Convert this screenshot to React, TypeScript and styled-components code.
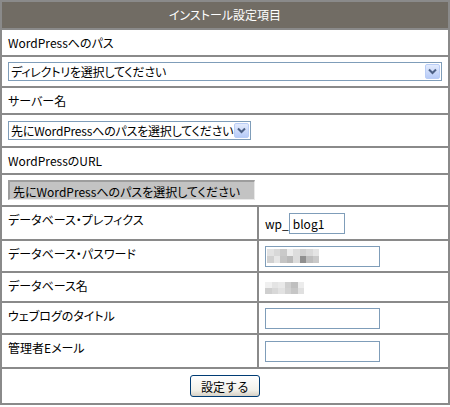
import React from 'react'
import styled, { createGlobalStyle } from 'styled-components'

const GlobalStyle = createGlobalStyle`
  html, body {
    margin: 0;
    padding: 0;
    background: #ffffff;
  }
  body {
    font-family: 'Noto Sans CJK JP', 'DejaVu Sans', sans-serif;
    font-size: 12px;
    color: #000000;
    font-feature-settings: 'palt';
  }
`

const SettingsTable = styled.table`
  width: 448px;
  border-collapse: separate;
  border-spacing: 0;
  border: 1px solid #8a8a8a;
  font-size: 12px;
  line-height: 14px;
`

const HeaderCell = styled.th`
  height: 26px;
  padding: 0;
  background: #716c64;
  color: #ffffff;
  font-weight: normal;
  text-align: center;
  border: 1px solid #8a8a8a;
`

const Cell = styled.td<{ $height?: number }>`
  height: ${({ $height }) => ($height ? `${$height}px` : 'auto')};
  padding: 0 6px;
  border: 1px solid #8a8a8a;
  vertical-align: middle;
  white-space: nowrap;
`

const LabelCell = styled.td`
  width: 243px;
  padding: 6px 6px 0;
  border: 1px solid #8a8a8a;
  vertical-align: top;
  white-space: nowrap;
`

const CenterCell = styled(Cell)`
  text-align: center;
`

const SelectWrap = styled.div<{ $width: number }>`
  position: relative;
  width: ${({ $width }) => $width}px;
  height: 19px;
  box-sizing: border-box;
  border: 1px solid #7f9db9;
  background: #ffffff;
`

const SelectBox = styled.select`
  appearance: none;
  width: 100%;
  height: 17px;
  border: none;
  outline: none;
  margin: 0;
  padding: 0 16px 0 2px;
  background: transparent;
  font-family: 'Noto Sans CJK JP', 'DejaVu Sans', sans-serif;
  font-size: 12px;
  letter-spacing: -0.2px;
  font-feature-settings: 'palt';
  color: #000000;
`

const ArrowButton = styled.span`
  position: absolute;
  top: 1px;
  right: 1px;
  width: 15px;
  height: 15px;
  box-sizing: border-box;
  border: 1px solid #b9cdf6;
  border-radius: 2px;
  background: linear-gradient(#e3ebfd, #b7cbf7);
  display: flex;
  align-items: center;
  justify-content: center;
  pointer-events: none;
`

const ReadonlyField = styled.div`
  width: 247px;
  height: 20px;
  box-sizing: border-box;
  padding: 2px 3px 0;
  background: #c3c3c3;
  border-top: 2px solid #9d9d9d;
  border-left: 2px solid #9d9d9d;
  border-right: 1px solid #e8e8e8;
  border-bottom: 1px solid #e8e8e8;
  font-size: 12px;
  line-height: 15px;
`

const Prefix = styled.span`
  vertical-align: middle;
`

const TextInput = styled.input<{ $width: number }>`
  width: ${({ $width }) => $width}px;
  height: 21px;
  box-sizing: border-box;
  border: 1px solid #7f9db9;
  padding: 0 3px;
  margin: 0;
  font-family: 'Noto Sans CJK JP', 'DejaVu Sans', sans-serif;
  font-size: 12px;
  vertical-align: middle;
  outline: none;
`

const FieldBox = styled.div`
  position: relative;
  display: inline-block;
  vertical-align: middle;
`

const Mosaic = styled.span<{ $cols: number }>`
  display: grid;
  grid-template-columns: repeat(${({ $cols }) => $cols}, 6.5px);
  grid-auto-rows: 7px;
`

const MosaicOverlay = styled(Mosaic)`
  position: absolute;
  top: 3px;
  left: 2px;
`

const MosaicInline = styled(Mosaic)`
  grid-auto-rows: 6px;
  margin-top: 1px;
`

const Pixel = styled.span<{ $shade: string }>`
  background: ${({ $shade }) => $shade};
`

const SubmitButton = styled.button`
  width: 70px;
  height: 22px;
  padding: 0;
  border: 1px solid #003c74;
  border-radius: 3px;
  background: linear-gradient(#ffffff, #f2f1ea 70%, #d6d0c5);
  font-family: 'Noto Sans CJK JP', 'DejaVu Sans', sans-serif;
  font-size: 12px;
  color: #000000;
`

const Arrow = () => (
  <svg width="9" height="7" viewBox="0 0 9 7">
    <path d="M1 1.5 L4.5 5 L8 1.5" fill="none" stroke="#4d6185" strokeWidth="2" />
  </svg>
)

const passwordShades = [
  '#e2e2e2', '#d8d8d8', '#c9c9c9', '#ececec', '#dddddd', '#cfcfcf', '#d9d9d9', '#e4e4e4',
  '#d0d0d0', '#e6e6e6', '#c4c4c4', '#b9b9b9', '#dcdcdc', '#8f8f8f', '#bdbdbd', '#c9c9c9',
]
const nameShades = [
  '#f0f0f0', '#e4e4e4', '#e9e9e9', '#cfcfcf', '#bfbfbf', '#ececec',
  '#cfcfcf', '#d8d8d8', '#e2e2e2', '#d2d2d2', '#c6c6c6', '#e0e0e0',
]

const Select: React.FC<{ width: number; label: string }> = ({ width, label }) => (
  <SelectWrap $width={width}>
    <SelectBox defaultValue="">
      <option value="">{label}</option>
    </SelectBox>
    <ArrowButton>
      <Arrow />
    </ArrowButton>
  </SelectWrap>
)

export default function App() {
  return (
    <>
      <GlobalStyle />
      <SettingsTable>
        <tbody>
          <tr>
            <HeaderCell colSpan={2}>インストール設定項目</HeaderCell>
          </tr>
          <tr>
            <Cell colSpan={2} $height={25}>WordPressへのパス</Cell>
          </tr>
          <tr>
            <Cell colSpan={2} $height={29}>
              <Select width={434} label="ディレクトリを選択してください" />
            </Cell>
          </tr>
          <tr>
            <Cell colSpan={2} $height={25}>サーバー名</Cell>
          </tr>
          <tr>
            <Cell colSpan={2} $height={31}>
              <Select width={243} label="先にWordPressへのパスを選択してください" />
            </Cell>
          </tr>
          <tr>
            <Cell colSpan={2} $height={25}>WordPressのURL</Cell>
          </tr>
          <tr>
            <Cell colSpan={2} $height={30}>
              <ReadonlyField>先にWordPressへのパスを選択してください</ReadonlyField>
            </Cell>
          </tr>
          <tr>
            <LabelCell>データベース・プレフィクス</LabelCell>
            <Cell $height={32}>
              <Prefix>wp_</Prefix>
              <TextInput $width={56} defaultValue="blog1" />
            </Cell>
          </tr>
          <tr>
            <LabelCell>データベース・パスワード</LabelCell>
            <Cell $height={30}>
              <FieldBox>
                <TextInput $width={115} defaultValue="" />
                <MosaicOverlay $cols={8}>
                  {passwordShades.map((s, i) => (
                    <Pixel key={i} $shade={s} />
                  ))}
                </MosaicOverlay>
              </FieldBox>
            </Cell>
          </tr>
          <tr>
            <LabelCell>データベース名</LabelCell>
            <Cell $height={28}>
              <MosaicInline $cols={6}>
                {nameShades.map((s, i) => (
                  <Pixel key={i} $shade={s} />
                ))}
              </MosaicInline>
            </Cell>
          </tr>
          <tr>
            <LabelCell>ウェブログのタイトル</LabelCell>
            <Cell $height={30}>
              <TextInput $width={115} defaultValue="" />
            </Cell>
          </tr>
          <tr>
            <LabelCell>管理者Eメール</LabelCell>
            <Cell $height={32}>
              <TextInput $width={115} defaultValue="" />
            </Cell>
          </tr>
          <tr>
            <CenterCell colSpan={2} $height={34}>
              <SubmitButton type="button">設定する</SubmitButton>
            </CenterCell>
          </tr>
        </tbody>
      </SettingsTable>
    </>
  )
}
